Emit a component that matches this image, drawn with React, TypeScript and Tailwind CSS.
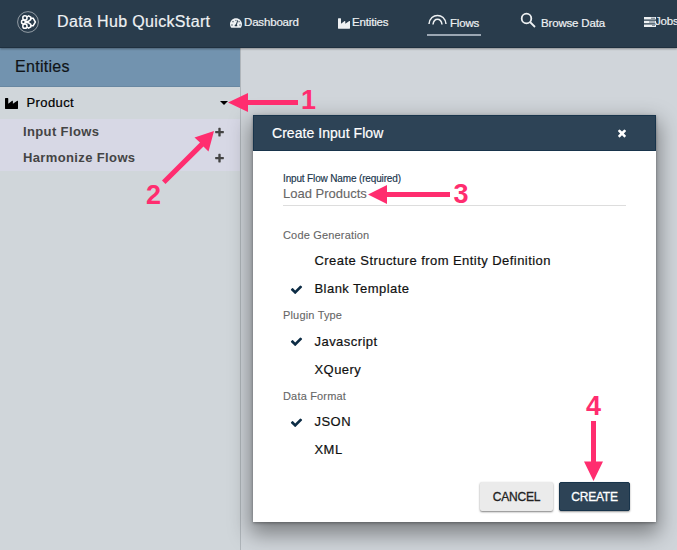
import React from "react";
import { FaTachometerAlt } from "react-icons/fa";

const CHECK =
  "M1671 566q0 40-28 68l-724 724-136 136q-28 28-68 28t-68-28l-136-136-362-362q-28-28-28-68t28-68l136-136q28-28 68-28t68 28l294 295 656-657q28-28 68-28t68 28l136 136q28 28 28 68z";
const TIMES =
  "M1490 1322q0 40-28 68l-136 136q-28 28-68 28t-68-28l-294-294-294 294q-28 28-68 28t-68-28l-136-136q-28-28-28-68t28-68l294-294-294-294q-28-28-28-68t28-68l136-136q28-28 68-28t68 28l294 294 294-294q28-28 68-28t68 28l136 136q28 28 28 68t-28 68l-294 294 294 294q28 28 28 68z";
const PLUS =
  "M1600 736v192q0 40-28 68t-68 28h-416v416q0 40-28 68t-68 28h-192q-40 0-68-28t-28-68v-416h-416q-40 0-68-28t-28-68v-192q0-40 28-68t68-28h416v-416q0-40 28-68t68-28h192q40 0 68 28t28 68v416h416q40 0 68 28t28 68z";

function Glyph({ d, className }: { d: string; className: string }) {
  return (
    <svg viewBox="0 0 1792 1792" fill="currentColor" className={className}>
      <path d={d} />
    </svg>
  );
}

function Industry({ className }: { className: string }) {
  return (
    <svg viewBox="0 0 14 12" fill="currentColor" className={className}>
      <path d="M0 .5Q0 0 .5 0H3Q3.500 0 3.500 .5V6.2L7.700 3.1Q8.500 2.7 8.500 3.5V6.2L13.2 3.1Q14 2.7 14 3.5V11.5Q14 12 13.5 12H.5Q0 12 0 11.5Z" />
    </svg>
  );
}

function Logo() {
  return (
    <svg viewBox="0 0 24 24" fill="none" stroke="#fff" className="h-6 w-6 shrink-0">
      <circle cx="12" cy="12" r="10.4" strokeWidth=".9" opacity=".55" />
      <g strokeWidth="1.5">
        <circle cx="8.9" cy="7.9" r="2.1" />
        <circle cx="7.4" cy="12" r="1.9" />
        <circle cx="8.9" cy="16.2" r="2.1" />
        <path d="M10.800 7 12.600 5.800 14.800 7.200V9.600L12.600 11.200 9.500 11.500M10.800 17l1.800 1.200 2.200-1.400V14.400L12.600 12.800 9.500 12.500M14.800 8.300h2.400l2.200 3.700-2.200 3.700h-2.400" />
      </g>
    </svg>
  );
}

function Option({ label, checked = false }: { label: string; checked?: boolean }) {
  return (
    <div className="flex h-7 items-center pl-[7px]">
      <span className="w-[24.5px] shrink-0 text-[#0c2c45]">
        {checked && <Glyph d={CHECK} className="h-[13px] w-[13px]" />}
      </span>
      <span className="whitespace-nowrap text-[13px] tracking-[0.45px] text-[#111] [-webkit-text-stroke:0.2px_#111]">{label}</span>
    </div>
  );
}

function Label({ children }: { children: string }) {
  return <div className="h-[24.5px] text-[11px] leading-[25px] tracking-[0.17px] text-[#666] [-webkit-text-stroke:0.1px_#666]">{children}</div>;
}

const NUM = "absolute text-[27px] font-bold leading-[27px] text-[#ff2d6f]";

export default function App() {
  return (
    <div className="relative flex h-[550px] w-[677px] flex-col overflow-hidden bg-[#d0d5da] font-['Liberation_Sans',Arial,sans-serif]">
      <header className="z-10 flex h-12 shrink-0 items-start border-b border-[#1f303f] bg-[#293c4c] text-[11.5px] tracking-[-0.17px] text-[#eef1f3] shadow-[0_1px_2px_rgba(0,0,0,0.35)] [-webkit-text-stroke:0.2px_#eef1f3]">
        <div className="flex h-11 w-[230px] shrink-0 items-center pl-4">
          <Logo />
          <h1 className="ml-[17px] whitespace-nowrap text-[16px] tracking-[0.35px]">Data Hub QuickStart</h1>
        </div>
        <div className="flex h-[46px] w-[108px] shrink-0 items-center gap-[2px]">
          <FaTachometerAlt className="h-3 w-3" />
          <span>Dashboard</span>
        </div>
        <div className="flex h-[46px] w-[89px] shrink-0 items-center gap-[2px]">
          <Industry className="h-[11px] w-3" />
          <span>Entities</span>
        </div>
        <div className="flex h-9 w-[54px] shrink-0 items-end border-b-2 border-[#9ba7b3] pb-[2px]">
          <svg viewBox="0 0 19 12" fill="none" stroke="currentColor" strokeWidth="1.5" className="mb-[6px] ml-[1px] h-3 w-[19px] shrink-0">
            <path d="M1 10C2-1.5 17-1.5 18 10M5 10.5C6 3.5 13 3.5 14 10.5" />
          </svg>
          <span className="ml-[3px]">Flows</span>
        </div>
        <div className="ml-[39px] flex h-11 w-[124px] shrink-0 items-start">
          <svg viewBox="0 0 16 16" fill="none" stroke="currentColor" strokeWidth="1.8" className="mt-[12px] h-4 w-4">
            <circle cx="6.500" cy="6.500" r="4.8" />
            <path d="m10 10 5 5" />
          </svg>
          <span className="ml-[5px] mt-[15px] whitespace-nowrap">Browse Data</span>
        </div>
        <div className="flex h-11 shrink-0 items-center">
          <svg viewBox="0 0 12 10" fill="currentColor" className="h-[10px] w-3">
            <path d="M0 0h12v2.5H0zM0 3.7h12v2.5H0zM0 7.4h12v2.5H0z" />
            <path d="M7 .8h4v.9H7zM5 4.5h6v.9H5zM8 8.2h3v.9H8z" fill="#657480" />
          </svg>
          <span className="-ml-px">Jobs</span>
        </div>
      </header>

      <div className="flex min-h-0 flex-1">
        <aside className="w-[241px] shrink-0 border-r border-[#afb5ba] bg-[#d0d6da]">
          <h2 className="flex h-[39px] items-center border-b border-[#6988a2] bg-[#7293af] pl-[15px] text-[16px] tracking-[0.3px] text-[#101418] [-webkit-text-stroke:0.2px_#101418]">
            Entities
          </h2>
          <div className="flex h-8 items-center pl-[5px] pr-3">
            <Industry className="h-[13px] w-[13px] text-black" />
            <span className="ml-[8.5px] flex-1 text-[13px] tracking-[0.4px] text-black [-webkit-text-stroke:0.2px_#000]">Product</span>
            <svg viewBox="0 0 8 4" className="h-1 w-2">
              <path d="M0 0h8L4 4Z" />
            </svg>
          </div>
          <div className="bg-[#d7d8e5] text-[13px] font-bold tracking-[0.37px] text-[#444]">
            {["Input Flows", "Harmonize Flows"].map((name) => (
              <div key={name} className="flex h-[26px] items-center justify-between pl-[23px] pr-[15px]">
                <span>{name}</span>
                <Glyph d={PLUS} className="h-[11px] w-[11px]" />
              </div>
            ))}
          </div>
        </aside>

        <main className="min-w-0 flex-1 pl-3 pt-[67px]">
          <section className="flex h-[407px] w-[403px] flex-col bg-white shadow-[0_9px_20px_3px_rgba(0,0,0,0.4),0_1px_3px_rgba(0,0,0,0.35)]">
            <div className="flex h-9 shrink-0 items-center justify-between border border-[#18344b] bg-[#2d4356] pl-[18px] pr-[27px] text-white">
              <h3 className="text-[14px] tracking-[0.05px] [-webkit-text-stroke:0.2px_#fff]">Create Input Flow</h3>
              <Glyph d={TIMES} className="h-[12px] w-[12px]" />
            </div>
            <div className="flex flex-1 flex-col px-[30px] pt-5">
              <div className="h-[15px] text-[10px] leading-[15px] tracking-[-0.15px] text-[#18344b] [-webkit-text-stroke:0.15px_#18344b]">
                Input Flow Name (required)
              </div>
              <div className="h-5 border-b border-[#ddd] text-[13px] leading-4 text-[#666] [-webkit-text-stroke:0.1px_#666]">Load Products</div>
              <div className="mt-[16.500px]">
                <Label>Code Generation</Label>
                <Option label="Create Structure from Entity Definition" />
                <Option label="Blank Template" checked />
                <Label>Plugin Type</Label>
                <Option label="Javascript" checked />
                <Option label="XQuery" />
                <Label>Data Format</Label>
                <Option label="JSON" checked />
                <Option label="XML" />
              </div>
            </div>
            <div className="mb-[11px] flex justify-end gap-[6px] pr-[26px] text-[12px] tracking-[-0.2px]">
              <button className="h-[29px] w-[73px] rounded-[2px] bg-[#ebebeb] text-[#222] shadow-[0_1px_2px_rgba(0,0,0,0.5)] [-webkit-text-stroke:0.3px_#222]">
                CANCEL
              </button>
              <button className="h-[29px] w-[71px] rounded-[2px] border border-[#18344b] bg-[#2d4356] text-white shadow-[0_1px_2px_rgba(0,0,0,0.4)] [-webkit-text-stroke:0.3px_#fff]">
                CREATE
              </button>
            </div>
          </section>
        </main>
      </div>

      <svg viewBox="0 0 677 550" className="pointer-events-none absolute inset-0 z-20 h-full w-full" fill="#ff2d6f">
        <path d="M228 102.5 248 93v7h50v5h-50v7Z" />
        <path d="M368 194.5 387 185v7h63v5h-63v7Z" />
        <path d="M214 131 208.500 151.500 203.500 146.500 165.500 184 162 180.500 200 142.500 194.500 137.500Z" />
        <path d="M593.500 481 584 461.500h7V421h5v40.500h7Z" />
      </svg>
      <span className={`${NUM} left-[301px] top-[87px] z-20`}>1</span>
      <span className={`${NUM} left-[146px] top-[182px] z-20`}>2</span>
      <span className={`${NUM} left-[453.5px] top-[181px] z-20`}>3</span>
      <span className={`${NUM} left-[586px] top-[393px] z-20`}>4</span>
    </div>
  );
}
